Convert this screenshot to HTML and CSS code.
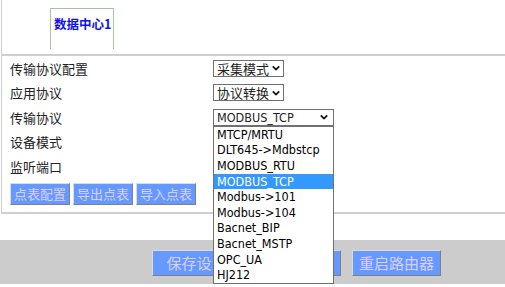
FILE: index.html
```html
<!DOCTYPE html>
<html lang="zh-CN">
<head>
  <meta charset="UTF-8">
  <title>数据中心</title>
  <link rel="stylesheet" href="styles.css">
</head>
<body>

  <div class="panel">
    <div class="tab-bar">
      <div class="tab">数据中心1</div>
    </div>

    <div class="form">
      <div class="row">
        <span class="label">传输协议配置</span>
        <div class="select sel-short"><span>采集模式</span><svg class="caret" viewBox="0 0 10 6"><path d="M1 1 L5 5 L9 1" /></svg></div>
      </div>
      <div class="row">
        <span class="label">应用协议</span>
        <div class="select sel-short"><span>协议转换</span><svg class="caret" viewBox="0 0 10 6"><path d="M1 1 L5 5 L9 1" /></svg></div>
      </div>
      <div class="row">
        <span class="label">传输协议</span>
        <div class="select-wrap">
          <div class="select sel-long"><span class="latin">MODBUS_TCP</span><svg class="caret" viewBox="0 0 10 6"><path d="M1 1 L5 5 L9 1" /></svg></div>
          <ul class="dropdown">
            <li>MTCP/MRTU</li>
            <li>DLT645-&gt;Mdbstcp</li>
            <li>MODBUS_RTU</li>
            <li class="active">MODBUS_TCP</li>
            <li>Modbus-&gt;101</li>
            <li>Modbus-&gt;104</li>
            <li>Bacnet_BIP</li>
            <li>Bacnet_MSTP</li>
            <li>OPC_UA</li>
            <li>HJ212</li>
          </ul>
        </div>
      </div>
      <div class="row">
        <span class="label">设备模式</span>
      </div>
      <div class="row">
        <span class="label">监听端口</span>
      </div>

      <div class="actions">
        <button class="btn">点表配置</button>
        <button class="btn">导出点表</button>
        <button class="btn">导入点表</button>
      </div>
    </div>
  </div>

  <div class="footer">
    <button class="btn btn-big">保存设置</button>
    <button class="btn btn-big">恢复设置</button>
    <button class="btn btn-big">重启路由器</button>
  </div>

</body>
</html>
```

FILE: styles.css
```css
body {
  margin: 0;
  font-family: "Noto Sans CJK SC", "DejaVu Sans", sans-serif;
  font-size: 13px;
  color: #222;
  background: #fff;
  width: 505px;
  height: 287px;
  overflow: hidden;
}

.panel {
  margin-left: 1px;
  border-left: 1px solid #cfcfcf;
  border-bottom: 2px solid #cfcfcf;
  padding-bottom: 7px;
}

.tab-bar {
  height: 56px;
  border-bottom: 2px solid #cfcfcf;
  box-sizing: border-box;
  padding-top: 8px;
  padding-left: 48px;
}

.tab {
  width: 59px;
  height: 34px;
  border: 1px solid #a9c3a0;
  border-bottom: none;
  color: #1010f0;
  font-weight: bold;
  font-size: 12.5px;
  line-height: 18px;
  padding-top: 6px;
  padding-left: 3px;
  white-space: nowrap;
}

.form {
  padding-left: 8px;
}

.row {
  height: 24.5px;
  display: flex;
  align-items: center;
}

.label {
  width: 203px;
  flex-shrink: 0;
}

.select-wrap {
  position: relative;
}

.select {
  height: 17px;
  box-sizing: border-box;
  border: 1px solid #707070;
  display: flex;
  align-items: center;
  justify-content: space-between;
  padding: 0 3px 0 3px;
  background: #fff;
  font-size: 13px;
}

.sel-short {
  width: 71px;
}

.sel-long {
  width: 121px;
  padding-right: 5px;
}

.latin {
  font-family: "DejaVu Sans Condensed", "Liberation Sans", sans-serif;
  font-size: 12.5px;
}

.caret {
  width: 8px;
  height: 6px;
  fill: none;
  stroke: #111;
  stroke-width: 2.2;
}

.dropdown {
  position: absolute;
  left: 0;
  top: 17px;
  width: 121px;
  box-sizing: border-box;
  margin: 0;
  padding: 0;
  list-style: none;
  border: 1px solid #707070;
  background: #fff;
  font-family: "DejaVu Sans Condensed", "Liberation Sans", sans-serif;
  font-size: 12.5px;
  color: #000;
  z-index: 5;
}

.dropdown li {
  height: 15.6px;
  line-height: 15.6px;
  padding-left: 3px;
  white-space: nowrap;
}

.dropdown li.active {
  background: #3399ff;
  color: #fff;
}

.actions {
  display: flex;
  gap: 3px;
  margin-top: 4px;
}

.btn {
  font-family: "Noto Sans CJK SC", sans-serif;
  font-size: 13px;
  height: 22px;
  padding: 0 3px;
  background: #6699ff;
  color: #d8d0ff;
  border: 1px solid;
  border-color: #dcdcdc #808080 #808080 #dcdcdc;
  margin: 0;
}

.footer {
  margin-top: 26px;
  height: 44px;
  background: #cccccc;
  display: flex;
  gap: 11px;
  padding-left: 152px;
  padding-top: 10px;
  box-sizing: border-box;
}

.btn-big {
  height: 26px;
  width: 89px;
  font-size: 15px;
}
```
